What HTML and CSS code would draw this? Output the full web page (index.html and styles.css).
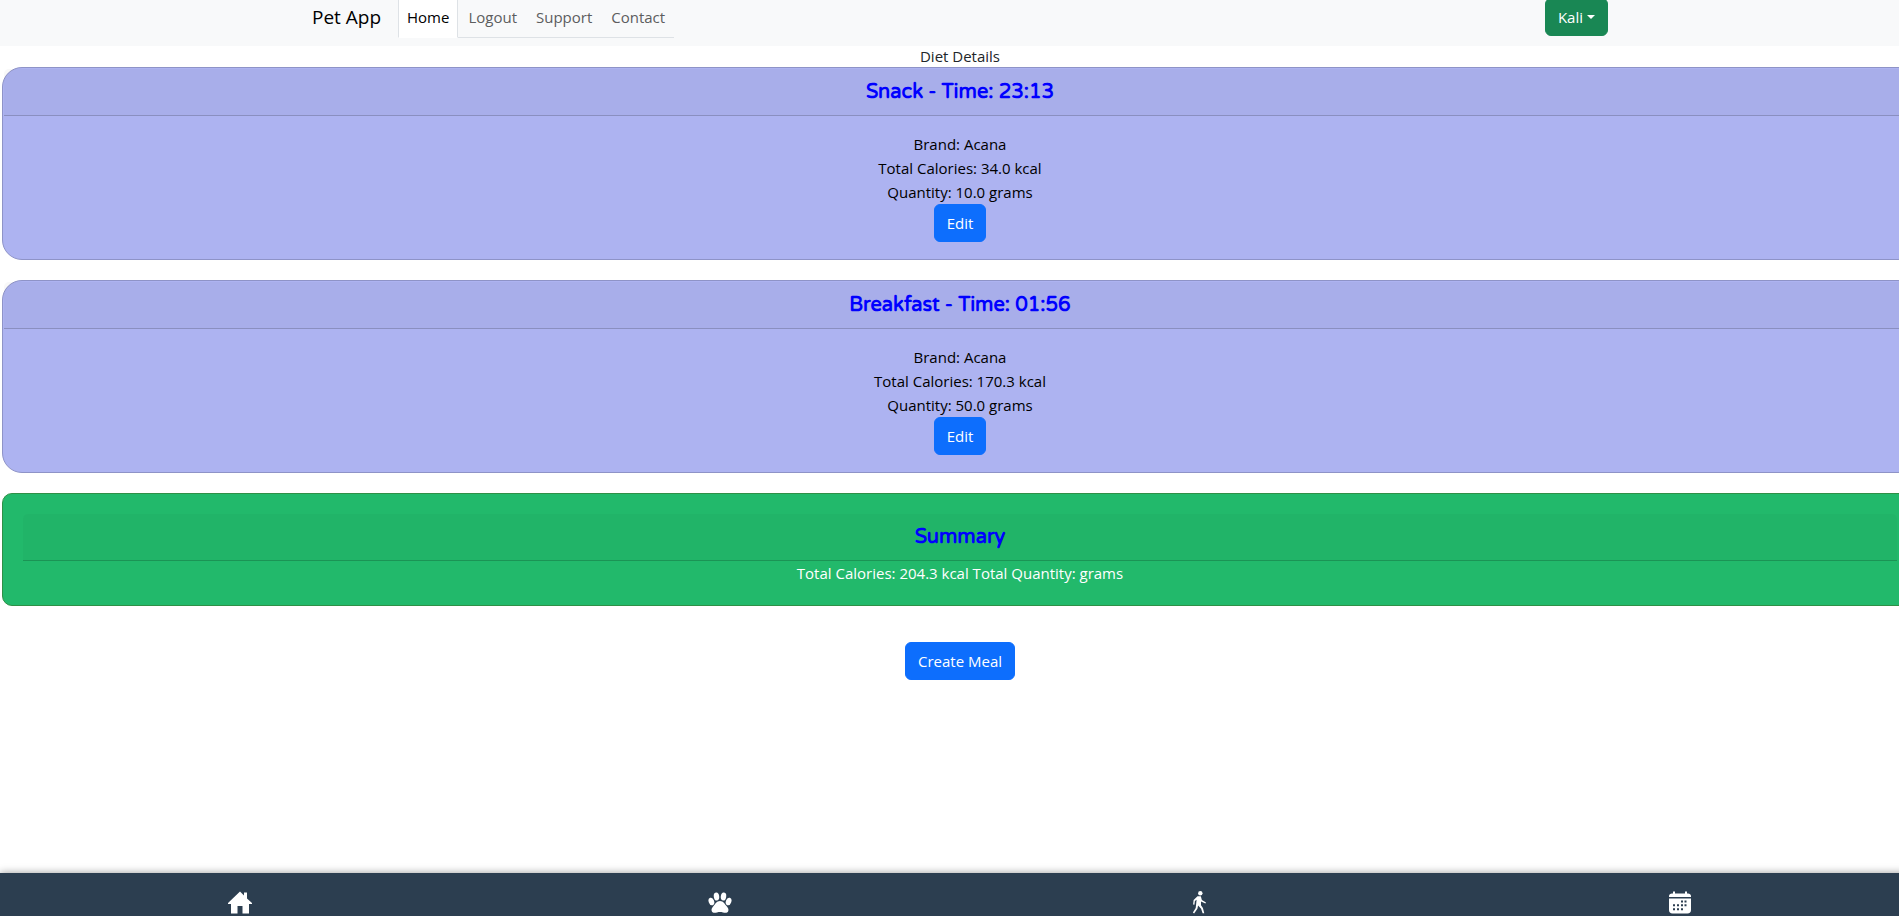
FILE: index.html
```html
<!DOCTYPE html>
<html lang="en">
<head>
<meta charset="utf-8">
<title>Pet App</title>
<link rel="stylesheet" href="styles.css">
</head>
<body>
<div class="page">
  <header class="navbar">
    <div class="container">
      <a class="brand" href="#">Pet App</a>
      <nav class="tabs">
        <a class="tab active" href="#">Home</a>
        <a class="tab" href="#">Logout</a>
        <a class="tab" href="#">Support</a>
        <a class="tab" href="#">Contact</a>
      </nav>
      <button class="btn user" type="button">Kali<span class="caret"></span></button>
    </div>
  </header>
  <main>
    <p class="title">Diet Details</p>
    <section class="card">
      <h2 class="card-header">Snack - Time: 23:13</h2>
      <div class="card-body">
        <p>Brand: Acana</p>
        <p>Total Calories: 34.0 kcal</p>
        <p>Quantity: 10.0 grams</p>
        <button class="btn" type="button">Edit</button>
      </div>
    </section>
    <section class="card">
      <h2 class="card-header">Breakfast - Time: 01:56</h2>
      <div class="card-body">
        <p>Brand: Acana</p>
        <p>Total Calories: 170.3 kcal</p>
        <p>Quantity: 50.0 grams</p>
        <button class="btn" type="button">Edit</button>
      </div>
    </section>
    <section class="card summary">
      <h2 class="card-header">Summary</h2>
      <p>Total Calories: 204.3 kcal Total Quantity: grams</p>
    </section>
    <div class="actions"><button class="btn" type="button">Create Meal</button></div>
  </main>
  <nav class="bottom">
    <a href="#" aria-label="Home"><svg viewBox="0 0 24 24"><path d="M12 0.500 16 4.500V1.500h3v6l5 4.500v1h-3v9.500h-6.500v-7.500h-5v7.500H3V13H0v-1z"/></svg></a>
    <a href="#" aria-label="Pets"><svg viewBox="0 0 24 24"><ellipse cx="8.500" cy="5.500" rx="2.700" ry="4" transform="rotate(-8 8.500 5.500)"/><ellipse cx="15.500" cy="5.500" rx="2.700" ry="4" transform="rotate(8 15.500 5.500)"/><ellipse cx="3.400" cy="10.500" rx="2.700" ry="3.900" transform="rotate(-20 3.400 10.500)"/><ellipse cx="20.600" cy="10.500" rx="2.700" ry="3.900" transform="rotate(20 20.600 10.500)"/><path d="M12 10c3.300 0 4.700 3 6.500 5 1.800 2 2.400 3.500 1.700 5.200-.9 2-3.200 1.800-5.200 1.200-2-.6-4-.6-6 0-2 .6-4.300.8-5.200-1.200-.7-1.700-.1-3.200 1.700-5.200 1.700-2 3.200-5 6.500-5z"/></svg></a>
    <a href="#" aria-label="Walks"><svg viewBox="0 0 24 24"><circle cx="12.300" cy="2.300" r="2.200"/><path d="M9.500 5.200h3.300l1.100 3.800 4.100 2.400-.6 1.200-4.400-2v3.600l1.900 2.800 1.400 5.300h-1.700l-1.500-4.600-3-3.200-.7 3.300-3.300 4.800-1.200-1 2.800-4.700.9-8.200-1.700 1.300-.5 3.700-1.300-.2.500-4.500z"/></svg></a>
    <a href="#" aria-label="Calendar"><svg viewBox="0 0 24 24"><path d="M5 .5h2v2h10v-2h2v2h1c1.700 0 3 1 3 2.500v1H1V5c0-1.500 1.300-2.500 3-2.500h1zM1 7.500h22V19c0 2-1.200 3.500-3.500 3.500h-15C2.200 22.500 1 21 1 19z"/><path class="days" d="M13 9.500h2v2h-2zm3.500 0h2v2h-2zM5 13.300h2v2H5zm4 0h2v2H9zm4 0h2v2h-2zm3.500 0h2v2h-2zM5 17.200h2v2H5zm4 0h2v2H9zm4 0h2v2h-2z"/></svg></a>
  </nav>
</div>
</body>
</html>
```
FILE: styles.css
```css
* { box-sizing: border-box; }
body {
  margin: 0;
  overflow: hidden;
  background: #fff;
  color: #212529;
  font: 15px/24px "Open Sans", "Noto Sans", sans-serif;
}
/* The page is scrolled slightly and runs past the right edge. */
.page {
  display: flex;
  flex-direction: column;
  width: calc(100% + 21px);
  height: calc(100vh + 12px);
  margin-top: -12px;
}
p, h2 { margin: 0; }
a { color: inherit; text-decoration: none; }
.navbar { padding: 8px 0; background: #f8f9fa; }
.container {
  display: flex;
  align-items: center;
  max-width: 1320px;
  margin: 0 auto;
  padding: 0 12px;
}
.brand { width: 86px; color: #000; font-size: 19px; white-space: nowrap; }
.tabs { display: flex; gap: 1px; border-bottom: 1px solid #dee2e6; }
.tab {
  padding: 8px;
  border: 1px solid transparent;
  margin-bottom: -1px;
  color: #5c5d5e;
}
.tab.active {
  border-color: #dee2e6 #dee2e6 #fff;
  background: #fff;
  color: #000;
}
.btn {
  padding: 6px 12px;
  border: 1px solid #0d6efd;
  border-radius: 6px;
  background: #0d6efd;
  color: #fff;
  font: inherit;
}
.user { margin-left: auto; border-color: #198754; background: #198754; }
.caret {
  display: inline-block;
  margin-left: 4px;
  vertical-align: 4px;
  border-top: 4px solid;
  border-right: 4px solid transparent;
  border-left: 4px solid transparent;
}
main { flex: 1; text-align: center; }
.title { line-height: 21px; }
.card {
  margin: 0 2px 20px;
  padding: 1px;
  border: 1px solid #8e93c7;
  border-radius: 20px;
  background: #adb3f1;
  color: #000;
}
.card-header {
  padding: 8px 16px;
  border-bottom: 1px solid rgba(0, 0, 0, 0.175);
  border-radius: 5px 5px 0 0;
  background: rgba(33, 37, 41, 0.03);
  color: #00f;
  font: bold 20px/30px "Varela Round", Lato, sans-serif;
}
.card-body { padding: 16px; }
.card-body .btn { display: block; margin: 0 auto; }
.summary {
  padding: 20px;
  border-color: #2f9046;
  border-radius: 10px;
  background: #22b96b;
  color: #fff;
}
.actions { padding-top: 16px; }
.bottom {
  display: grid;
  grid-template-columns: repeat(4, 1fr);
  padding: 18px 0 1px;
  background: #2c3e50;
  box-shadow: 0 0 8px rgba(0, 0, 0, 0.4);
}
.bottom a { display: flex; justify-content: center; }
.bottom svg { width: 24px; height: 24px; fill: #fff; }
.bottom .days { fill: #2c3e50; }
```
